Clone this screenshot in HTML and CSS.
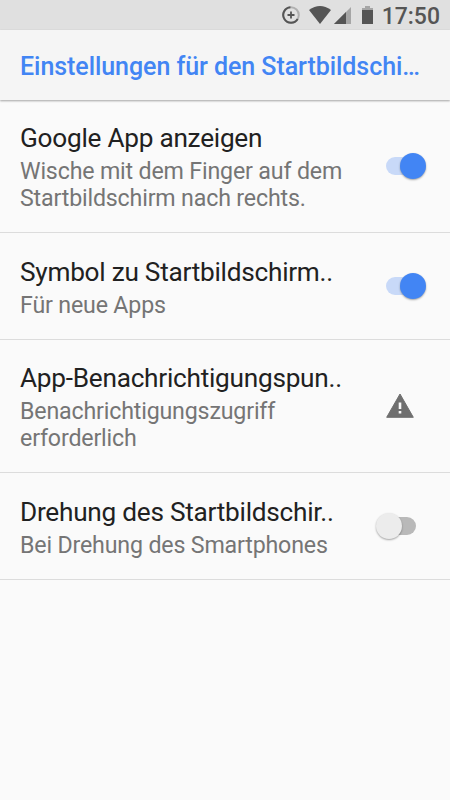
FILE: index.html
```html
<!DOCTYPE html>
<html lang="de">

<head>
    <meta charset="utf-8">
    <title>Einstellungen</title>
    <link rel="stylesheet" href="styles.css">
</head>

<body>
    <div class="statusbar">
        <svg class="icon-saver" width="20" height="20" viewBox="0 0 20 20">
            <circle cx="10" cy="10" r="7.8" fill="none" stroke="#b0b0b0" stroke-width="2" />
            <path d="M9.4 2.2A7.8 7.8 0 1 0 16.7 14" fill="none" stroke="#555" stroke-width="2" />
            <path d="M10 6.5v7M6.5 10h7" stroke="#555" stroke-width="1.8" />
        </svg>
        <svg class="icon-wifi" width="22" height="18" viewBox="0 0 22 18">
            <path d="M0 4Q11-4 22 4L11 18z" fill="#555" />
        </svg>
        <svg class="icon-signal" width="17" height="17" viewBox="0 0 17 17">
            <path d="M0 17L17 0v17z" fill="#a6a6a6" />
            <path d="M0 17L12 5v12z" fill="#555" />
        </svg>
        <svg class="icon-battery" width="11" height="18" viewBox="0 0 11 18">
            <path d="M3 0h5v2h3v2H0V2h3z" fill="#a6a6a6" />
            <path d="M0 4h11v14H0z" fill="#555" />
        </svg>
        <span class="clock">17:50</span>
    </div>
    <header>
        <h1>Einstellungen für den Startbildschi…</h1>
    </header>
    <ul class="settings">
        <li class="tall">
            <div class="text">
                <h2>Google App anzeigen</h2>
                <p>Wische mit dem Finger auf dem<br>Startbildschirm nach rechts.</p>
            </div>
            <span class="switch on"></span>
        </li>
        <li>
            <div class="text">
                <h2>Symbol zu Startbildschirm..</h2>
                <p>Für neue Apps</p>
            </div>
            <span class="switch on"></span>
        </li>
        <li class="tall">
            <div class="text">
                <h2>App-Benachrichtigungspun..</h2>
                <p>Benachrichtigungszugriff<br>erforderlich</p>
            </div>
            <svg class="warning" width="28" height="25" viewBox="0 0 28 25">
                <path d="M14 1l13.3 23.3H.7z" fill="#6f6f6f" stroke="#6f6f6f" stroke-linejoin="round" />
                <path d="M12.7 9.5h2.6v6.5h-2.6zM12.7 18h2.6v2.6h-2.6z" fill="#fafafa" />
            </svg>
        </li>
        <li>
            <div class="text">
                <h2>Drehung des Startbildschir..</h2>
                <p>Bei Drehung des Smartphones</p>
            </div>
            <span class="switch"></span>
        </li>
    </ul>
</body>

</html>
```

FILE: styles.css
```css
body {
    margin: 0;
    background-color: #fafafa;
    font-family: Roboto, 'Noto Sans', sans-serif;
    color: #212121;
    overflow: hidden;
}

.statusbar {
    display: flex;
    justify-content: flex-end;
    align-items: center;
    height: 30px;
    padding-right: 10px;
    background-color: #e0e0e0;
    color: #555;
}
.icon-wifi {
    margin-left: 8px;
}
.icon-signal {
    margin-left: 3px;
}
.icon-battery {
    margin-left: 11px;
}
.clock {
    margin-left: 9px;
    font-size: 23px;
    font-weight: 500;
    line-height: 30px;
    padding-top: 4px;
}

header {
    height: 70px;
    background-color: #f5f5f5;
    box-shadow: 0 1px 2px rgba(0, 0, 0, .35);
}
h1 {
    margin: 0;
    padding: 2px 0 0 20px;
    font-size: 25px;
    font-weight: 500;
    line-height: 70px;
    letter-spacing: -.06px;
    color: #4285f4;
    white-space: nowrap;
}

.settings {
    margin: 0;
    padding: 0;
    list-style: none;
}
.settings li {
    display: flex;
    justify-content: space-between;
    box-sizing: border-box;
    align-items: center;
    height: 107px;
    padding: 0 24px 0 20px;
    border-bottom: solid 1px #dcdcdc;
}
.settings li.tall {
    height: 133px;
}
.text {
    padding-top: 1px;
    white-space: nowrap;
}
h2 {
    margin: 0 0 3px;
    font-size: 26.2px;
    font-weight: 400;
    line-height: 34px;
    letter-spacing: -.25px;
}
p {
    margin: 0;
    font-size: 23.2px;
    line-height: 27px;
    letter-spacing: -.17px;
    color: #757575;
}

.switch {
    position: relative;
    width: 30px;
    height: 18px;
    margin-right: 10px;
    border-radius: 9px;
    background-color: #b9b9b9;
}
.switch::after {
    content: '';
    position: absolute;
    top: -4px;
    left: -10px;
    width: 26px;
    height: 26px;
    border-radius: 50%;
    background-color: #ececec;
    box-shadow: 0 1px 2px rgba(0, 0, 0, .35);
}
.switch.on {
    background-color: #c8d9f8;
}
.switch.on::after {
    left: 14px;
    background-color: #4285f4;
}
.warning {
    margin: 0 12px 2px 0;
}
```
